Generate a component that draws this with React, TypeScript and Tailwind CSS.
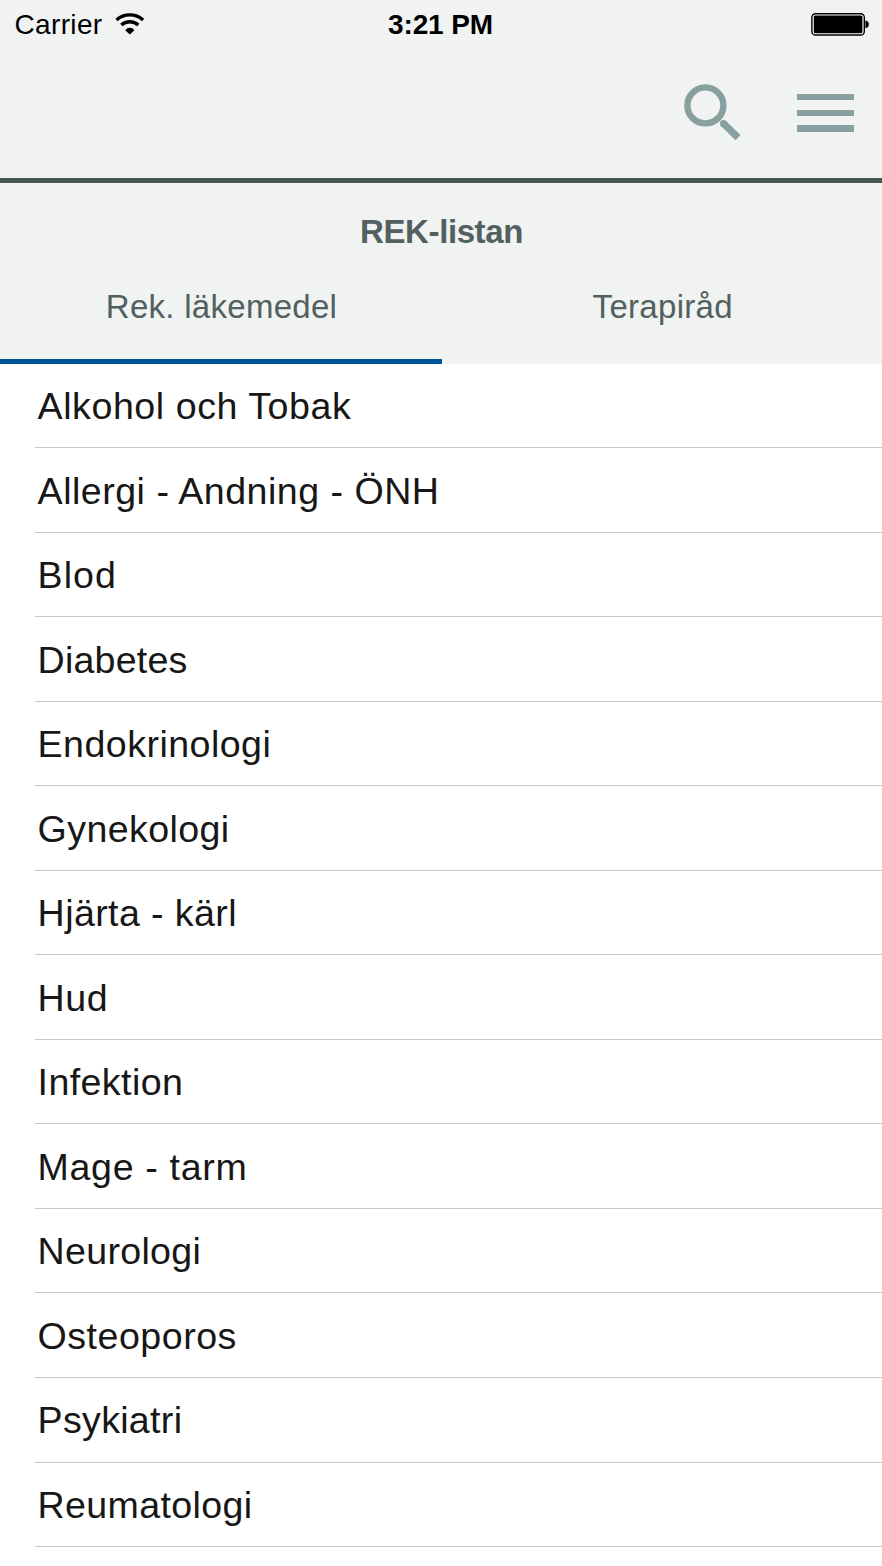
import React from "react";

type Category = { name: string; tracking: string };

const categories: Category[] = [
  { name: "Alkohol och Tobak", tracking: "tracking-[0.55px]" },
  { name: "Allergi - Andning - ÖNH", tracking: "tracking-[0.49px]" },
  { name: "Blod", tracking: "tracking-[1px]" },
  { name: "Diabetes", tracking: "tracking-[0.2px]" },
  { name: "Endokrinologi", tracking: "tracking-[0.46px]" },
  { name: "Gynekologi", tracking: "tracking-[0.4px]" },
  { name: "Hjärta - kärl", tracking: "tracking-[0.4px]" },
  { name: "Hud", tracking: "tracking-[0.5px]" },
  { name: "Infektion", tracking: "tracking-[0.4px]" },
  { name: "Mage - tarm", tracking: "tracking-[0.66px]" },
  { name: "Neurologi", tracking: "tracking-[0.3px]" },
  { name: "Osteoporos", tracking: "tracking-[0.5px]" },
  { name: "Psykiatri", tracking: "tracking-[0.3px]" },
  { name: "Reumatologi", tracking: "tracking-[0.35px]" },
];

function WifiIcon() {
  return (
    <svg className="mb-[2px] h-[22px] w-[30px]" viewBox="0 0 30 22" fill="none" stroke="#000">
      <path d="M1.5 6.9 A20 20 0 0 1 28.1 6.9" strokeWidth="3.4" />
      <path d="M6.3 12 A12.8 12.8 0 0 1 23.3 12" strokeWidth="3.4" />
      <path d="M14.8 21.4 L10.2 17.2 A5.6 5.6 0 0 1 19.4 17.2 Z" fill="#000" stroke="none" />
    </svg>
  );
}

function BatteryIcon() {
  return (
    <svg className="h-[23px] w-[59px]" viewBox="0 0 59 23">
      <rect x="0.9" y="0.8" width="52.4" height="21.2" rx="3.6" fill="#fff" stroke="#000" strokeWidth="1.4" />
      <rect x="2.8" y="2.5" width="48.6" height="17.8" rx="1.4" fill="#000" />
      <path d="M54.4 7.4 Q57.8 7.8 57.8 11.3 Q57.8 14.8 54.4 15.2 Z" fill="#000" />
    </svg>
  );
}

function StatusBar() {
  return (
    <div className="grid h-[50px] grid-cols-3 text-[28px] leading-[49px] text-black">
      <div className="flex h-[49px] items-center gap-[12.5px] pl-[14.5px]">
        <span className="tracking-[0.35px]">Carrier</span>
        <WifiIcon />
      </div>
      <div className="pr-[1px] text-center text-[28px] font-bold tracking-[-0.1px]">3:21 PM</div>
      <div className="flex justify-end pr-[12px] pt-[13px]">
        <BatteryIcon />
      </div>
    </div>
  );
}

function Toolbar() {
  return (
    <div className="flex h-[133px] items-start justify-end gap-[56px] border-b-[5px] border-[#495857] pr-[28px] pt-[34px]">
      <button aria-label="Sök">
        <svg className="block h-[57px] w-[57px]" viewBox="0 0 57 57" fill="none" stroke="#88a09f">
          <circle cx="21.4" cy="21.4" r="18" strokeWidth="6.4" />
          <path d="M39 39 L54 53.6" strokeWidth="7.2" />
          <circle cx="39.4" cy="39.4" r="3.5" fill="#88a09f" stroke="none" />
        </svg>
      </button>
      <button aria-label="Meny" className="flex w-[57px] flex-col gap-[9.4px] pt-[9.8px]">
        <span className="h-[6.4px] w-full bg-[#88a09f]" />
        <span className="h-[6.4px] w-full bg-[#88a09f]" />
        <span className="h-[6.4px] w-full bg-[#88a09f]" />
      </button>
    </div>
  );
}

export default function App() {
  return (
    <div className="h-[1566px] w-[882px] overflow-hidden bg-white font-['Liberation_Sans',Arial,sans-serif]">
      <header className="h-[364px] bg-[#f0f3f2]">
        <StatusBar />
        <Toolbar />
        <h1 className="h-[73px] pl-[1px] pt-[29px] text-center text-[33px] font-bold leading-[40px] tracking-[-0.4px] text-[#52605f]">
          REK-listan
        </h1>
        <nav className="flex h-[108px] text-center text-[33px] leading-[40px] text-[#52605f]">
          <div className="w-[442px] border-b-[5px] border-[#005496] pl-[1px] pt-[31px] tracking-[0.28px]">Rek. läkemedel</div>
          <div className="w-[440px] pl-[1.5px] pt-[31px] tracking-[0.3px]">Terapiråd</div>
        </nav>
      </header>
      <ul className="-mt-[0.4px] pl-[35px]">
        {categories.map((c) => (
          <li
            key={c.name}
            className="flex h-[84.54px] items-center border-b border-[#c8c8cb] pl-[2.6px] pt-[3px] text-[37.6px] leading-none text-[#171717]"
          >
            <span className={c.tracking}>{c.name}</span>
          </li>
        ))}
      </ul>
    </div>
  );
}
